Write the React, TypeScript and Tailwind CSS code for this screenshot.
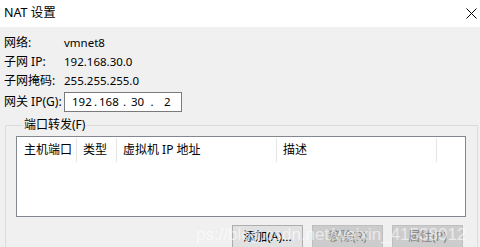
import React from "react";

const font = { fontFamily: '"Segoe UI", "Noto Sans", "Noto Sans CJK SC", sans-serif' };

export default function App() {
  return (
    <div
      className="relative w-[480px] h-[247px] overflow-hidden bg-[#f0f0f0] text-[12px] text-black"
      style={font}
    >
      {/* Title bar */}
      <div className="h-[27px] bg-white flex items-center justify-between pl-[4px] pr-[3px]">
        <span className="text-[12.5px] leading-none">NAT 设置</span>
        <svg width="11" height="11" viewBox="0 0 11 11">
          <path d="M0.5 0.5 L10.5 10.5 M10.5 0.5 L0.5 10.5" stroke="#000" strokeWidth="1" />
        </svg>
      </div>

      {/* Info rows */}
      <div className="pt-[6px] pl-[4px] flex flex-col">
        <div className="h-[19px] flex items-center">
          <span className="w-[60px]">网络:</span>
          <span className="text-[11.5px]">vmnet8</span>
        </div>
        <div className="h-[19px] flex items-center">
          <span className="w-[60px]">子网 IP:</span>
          <span className="text-[11.5px]">192.168.30.0</span>
        </div>
        <div className="h-[19px] flex items-center">
          <span className="w-[60px]">子网掩码:</span>
          <span className="text-[11.5px]">255.255.255.0</span>
        </div>
        <div className="mt-[2px] h-[20px] flex items-center">
          <span className="w-[60px]">网关 IP(G):</span>
          <div className="w-[118px] h-[20px] border border-[#7a7a7a] bg-white flex items-center pl-[7px] text-[11.5px]">
            <span className="w-[20px]">192</span>
            <span className="w-[7px] text-center">.</span>
            <span className="w-[22px]">168</span>
            <span className="w-[7px] text-center">.</span>
            <span className="w-[16px] pl-[3px]">30</span>
            <span className="w-[16px] text-center">.</span>
            <span className="pl-[4px]">2</span>
          </div>
        </div>
      </div>

      {/* Group box */}
      <fieldset className="ml-[5px] mt-[5px] w-[473px] h-[140px] border border-[#dcdcdc] pl-[10px] pt-[3px]">
        <legend className="ml-[7px] px-[1px] leading-[16px]">端口转发(F)</legend>
        <div className="w-[450px] h-[81px] border border-[#828790] bg-white">
          <div className="flex h-[24px] mt-[1px]">
            <div className="w-[60px] border-r border-[#e5e5e5] pl-[7px] flex items-center">主机端口</div>
            <div className="w-[40px] border-r border-[#e5e5e5] pl-[6px] flex items-center">类型</div>
            <div className="w-[160px] border-r border-[#e5e5e5] pl-[6px] flex items-center">
              虚拟机 IP 地址
            </div>
            <div className="w-[160px] border-r border-[#e5e5e5] pl-[6px] flex items-center">描述</div>
          </div>
        </div>
        <div className="flex gap-[9px] mt-[8px] ml-[216px]">
          <button className="w-[71px] h-[23px] border border-[#adadad] bg-[#e1e1e1] text-black">
            添加(A)...
          </button>
          <button className="w-[71px] h-[23px] border border-[#bfbfbf] bg-[#cccccc] text-[#838383]">
            移除(R)
          </button>
          <button className="w-[71px] h-[23px] border border-[#bfbfbf] bg-[#cccccc] text-[#838383]">
            属性(P)
          </button>
        </div>
      </fieldset>

      {/* Watermark */}
      <div
        className="absolute left-[196px] top-[222px] text-[17px] text-white/60 whitespace-nowrap pointer-events-none"
        style={{ fontFamily: '"Liberation Sans", sans-serif' }}
      >
        ps://blog.csdn.net/weixin_41538012
      </div>
    </div>
  );
}
